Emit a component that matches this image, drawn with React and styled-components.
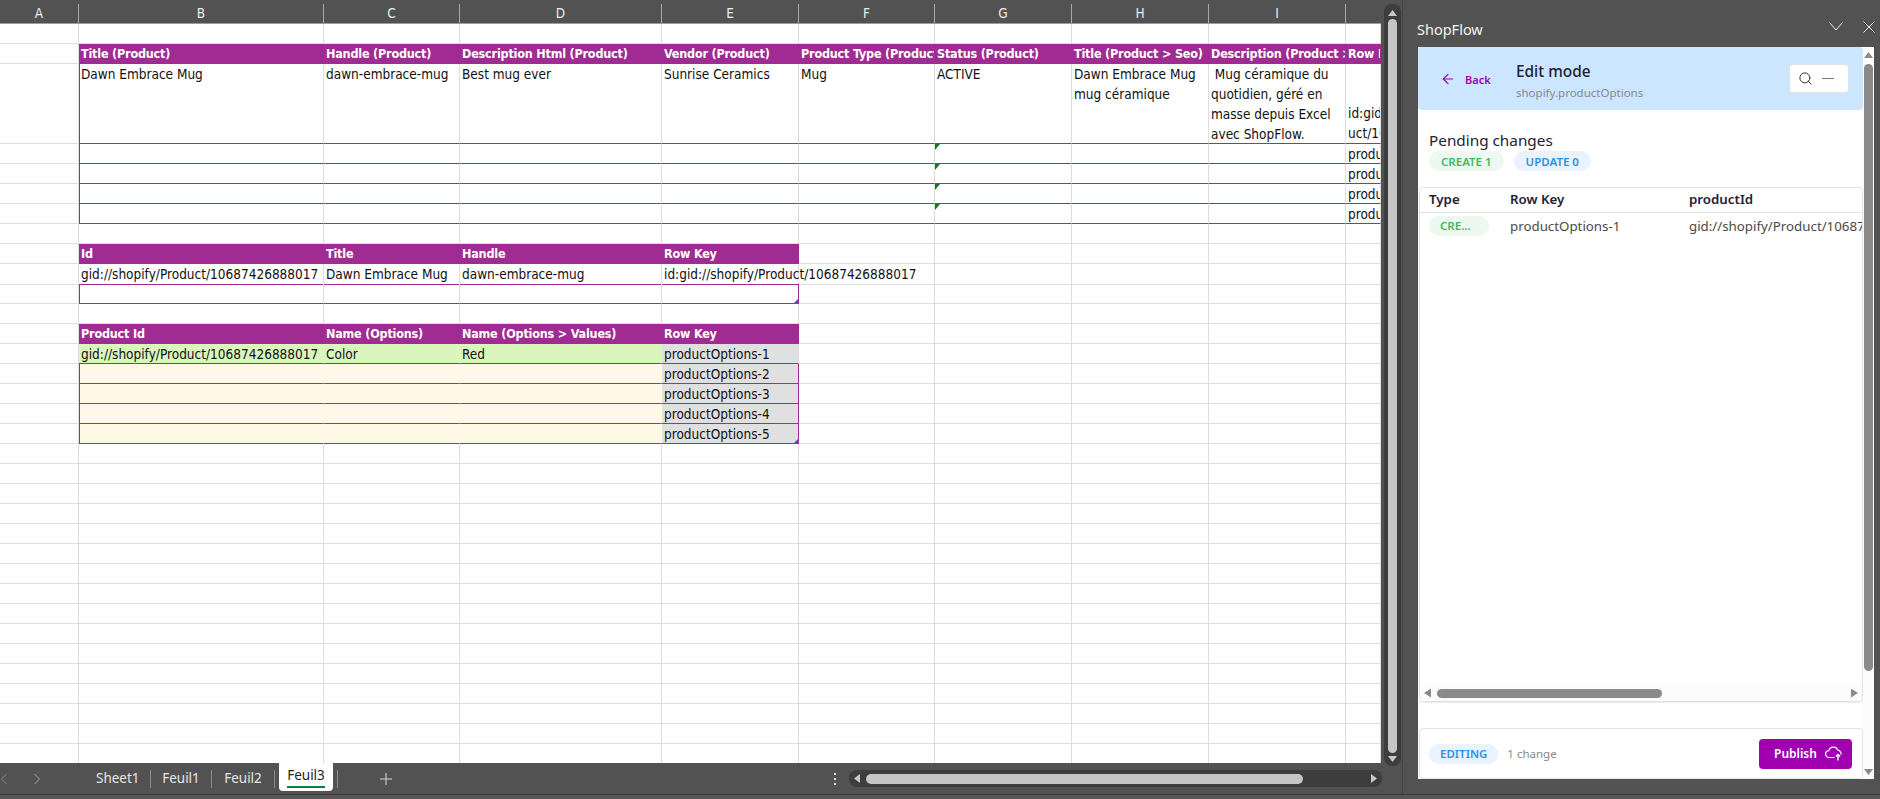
import styled, { createGlobalStyle } from 'styled-components';
import { ArrowLeft, Search } from 'lucide-react';

const GlobalStyle = createGlobalStyle`
	html, body {
		margin: 0;
		padding: 0;
		background: #525252;
	}
	* {
		box-sizing: border-box;
	}
`;

const COLUMNS = [79, 245, 136, 202, 137, 136, 137, 137, 137, 35];
const LETTERS = ['A', 'B', 'C', 'D', 'E', 'F', 'G', 'H', 'I', 'J'];
const GID = 'gid://shopify/Product/10687426888017';

const blankRow = (height = 20) => ({ height, cells: {} });

// builds one table row, span = last column of that table
const tableRow = (values, span, opts = {}) => {
	const cells = {};
	for (let i = 1; i <= span; i++) {
		cells[i] = {
			text: values[i - 1] || '',
			head: opts.head,
			ruled: opts.ruled,
			tone: opts.tone && opts.tone(i),
			leading: opts.boxed && i === 1,
			trailing: opts.boxed && opts.closed && i === span,
			tick: opts.tick && i === 6,
			handle: opts.handle && i === span,
		};
	}
	return { height: opts.height || 20, cells };
};

const optionTone = (first) => (i) => (i === 4 ? 'grey' : first ? 'green' : 'cream');

const rows = [
	blankRow(),
	tableRow(
		[
			'Title (Product)',
			'Handle (Product)',
			'Description Html (Product)',
			'Vendor (Product)',
			'Product Type (Product)',
			'Status (Product)',
			'Title (Product > Seo)',
			'Description (Product > Seo)',
			'Row Key',
		],
		9,
		{ head: true }
	),
	tableRow(
		[
			'Dawn Embrace Mug',
			'dawn-embrace-mug',
			'Best mug ever',
			'Sunrise Ceramics',
			'Mug',
			'ACTIVE',
			'Dawn Embrace Mug\nmug céramique',
			' Mug céramique du\nquotidien, géré en\nmasse depuis Excel\navec ShopFlow.',
			'id:gid\nuct/10',
		],
		9,
		{ height: 80, ruled: true, boxed: true }
	),
	tableRow(['', '', '', '', '', '', '', '', 'productOptions-1'], 9, { ruled: true, boxed: true, tick: true }),
	tableRow(['', '', '', '', '', '', '', '', 'productOptions-2'], 9, { ruled: true, boxed: true, tick: true }),
	tableRow(['', '', '', '', '', '', '', '', 'productOptions-3'], 9, { ruled: true, boxed: true, tick: true }),
	tableRow(['', '', '', '', '', '', '', '', 'productOptions-4'], 9, { ruled: true, boxed: true, tick: true }),
	blankRow(),
	tableRow(['Id', 'Title', 'Handle', 'Row Key'], 4, { head: true }),
	tableRow([GID, 'Dawn Embrace Mug', 'dawn-embrace-mug', 'id:' + GID], 4, { ruled: true }),
	tableRow([], 4, { ruled: true, boxed: true, closed: true, handle: true }),
	blankRow(),
	tableRow(['Product Id', 'Name (Options)', 'Name (Options > Values)', 'Row Key'], 4, { head: true }),
	tableRow([GID, 'Color', 'Red', 'productOptions-1'], 4, { ruled: true, tone: optionTone(true) }),
	tableRow(['', '', '', 'productOptions-2'], 4, { ruled: true, boxed: true, closed: true, tone: optionTone(false) }),
	tableRow(['', '', '', 'productOptions-3'], 4, { ruled: true, boxed: true, closed: true, tone: optionTone(false) }),
	tableRow(['', '', '', 'productOptions-4'], 4, { ruled: true, boxed: true, closed: true, tone: optionTone(false) }),
	tableRow(['', '', '', 'productOptions-5'], 4, { ruled: true, boxed: true, closed: true, handle: true, tone: optionTone(false) }),
	...Array.from({ length: 16 }, () => blankRow()),
];

const TONES = { green: '#daf6bd', cream: '#fff8e6', grey: '#e0e0e0' };

const Cell = ({ cell }) => {
	if (!cell) return <GridCell />;
	const bottomAligned = cell.text === 'id:gid\nuct/10';
	return (
		<GridCell
			$head={cell.head}
			$ruled={cell.ruled}
			$tone={cell.tone}
			$leading={cell.leading}
			$trailing={cell.trailing}
			$tick={cell.tick}
			$handle={cell.handle}
			$bottom={bottomAligned}
			$spill={cell.text.startsWith('id:gid://')}
		>
			{cell.text}
		</GridCell>
	);
};

const Arrow = styled.span`
	display: block;
	flex: none;
	width: ${(p) => p.$w || 8}px;
	height: ${(p) => p.$h || 6}px;
	background: ${(p) => p.$color || '#c8c8c8'};
	clip-path: ${(p) =>
		({
			up: 'polygon(50% 0, 100% 100%, 0 100%)',
			down: 'polygon(0 0, 100% 0, 50% 100%)',
			left: 'polygon(100% 0, 100% 100%, 0 50%)',
			right: 'polygon(0 0, 100% 50%, 0 100%)',
		})[p.$dir]};
`;

const App = () => {
	return (
		<>
			<GlobalStyle />
			<Window>
				<Main>
					<Workbook>
						<SheetRow>
							<Sheet>
								<ColumnHeader>
									{LETTERS.map((letter) => (
										<ColumnLetter key={letter}>{letter === 'J' ? '' : letter}</ColumnLetter>
									))}
								</ColumnHeader>
								{rows.map((row, r) => (
									<SheetLine key={r} $height={row.height}>
										{COLUMNS.map((_, c) => (
											<Cell key={c} cell={row.cells[c]} />
										))}
									</SheetLine>
								))}
							</Sheet>
							<SheetScrollGutter>
								<SheetScrollTrack>
									<Arrow $dir='up' $w={9} $h={6} />
									<SheetScrollThumb />
									<Arrow $dir='down' $w={9} $h={6} />
								</SheetScrollTrack>
							</SheetScrollGutter>
						</SheetRow>
						<TabBar>
							<TabNav>
								<NavChevron viewBox='0 0 8 12' $left={0} $dim>
									<path d='M6.5 1 1.5 6l5 5' />
								</NavChevron>
								<NavChevron viewBox='0 0 8 12' $left={33}>
									<path d='M1.5 1l5 5-5 5' />
								</NavChevron>
							</TabNav>
							<Tab $w={54} $first>Sheet1</Tab>
							<TabDivider />
							<Tab $w={60}>Feuil1</Tab>
							<TabDivider />
							<Tab $w={62}>Feuil2</Tab>
							<TabDivider />
							<ActiveTab>Feuil3</ActiveTab>
							<TabDivider />
							<AddSheet>
								<svg width='12' height='12' viewBox='0 0 12 12'>
									<path d='M6 0v12M0 6h12' stroke='#d8d8d8' strokeWidth='1' fill='none' />
								</svg>
							</AddSheet>
							<TabDots>
								<i />
								<i />
								<i />
							</TabDots>
							<HScroll>
								<Arrow $dir='left' $w={6} $h={9} />
								<HScrollThumb />
								<Arrow $dir='right' $w={6} $h={9} />
							</HScroll>
						</TabBar>
					</Workbook>
					<Panel>
						<PanelTitleBar>
							<PanelTitle>ShopFlow</PanelTitle>
							<PanelControls>
								<svg width='14' height='9' viewBox='0 0 14 9'>
									<path d='M.5.5 7 8 13.5.5' stroke='#eee' fill='none' />
								</svg>
								<svg width='12' height='12' viewBox='0 0 12 12'>
									<path d='M.5.5l11 11M11.5.5l-11 11' stroke='#eee' fill='none' />
								</svg>
							</PanelControls>
						</PanelTitleBar>
						<PanelBody>
							<PanelContent>
								<EditHeader>
									<BackLink>
										<ArrowLeft size={16} strokeWidth={1.8} />
										<span>Back</span>
									</BackLink>
									<EditTitles>
										<EditTitle>Edit mode</EditTitle>
										<EditSubtitle>shopify.productOptions</EditSubtitle>
									</EditTitles>
									<SearchBox>
										<Search size={15} strokeWidth={1.6} />
										<SearchDash />
									</SearchBox>
								</EditHeader>
								<Pending>
									<PendingTitle>Pending changes</PendingTitle>
									<BadgeRow>
										<Badge $kind='create'>CREATE 1</Badge>
										<Badge $kind='update'>UPDATE 0</Badge>
									</BadgeRow>
								</Pending>
								<ChangesCard>
									<ChangesHead>
										<TypeCol>Type</TypeCol>
										<KeyCol>Row Key</KeyCol>
										<IdCol>productId</IdCol>
									</ChangesHead>
									<ChangesRow>
										<TypeCol>
											<TypeBadge>CRE...</TypeBadge>
										</TypeCol>
										<KeyCol>productOptions-1</KeyCol>
										<IdCol>{GID}</IdCol>
									</ChangesRow>
									<CardSpacer />
									<CardScroll>
										<Arrow $dir='left' $w={7} $h={9} $color='#8a8a8a' />
										<CardScrollTrack>
											<CardScrollThumb />
										</CardScrollTrack>
										<Arrow $dir='right' $w={7} $h={9} $color='#8a8a8a' />
									</CardScroll>
								</ChangesCard>
								<FooterCard>
									<Badge $kind='update' $tight>EDITING</Badge>
									<ChangeCount>1 change</ChangeCount>
									<PublishButton>
										<span>Publish</span>
										<svg width='17' height='15' viewBox='0 0 17 15' fill='none' stroke='#fff' strokeWidth='1.2'>
											<path d='M9.5 11.5H4.2a3.4 3.4 0 0 1-.4-6.8 4.8 4.8 0 0 1 9.1-.6 3.6 3.6 0 0 1 3 4.6' />
											<path d='M13 14.5V8.6M10.9 10.6l2.1-2.1 2.1 2.1' strokeWidth='1.4' />
										</svg>
									</PublishButton>
								</FooterCard>
							</PanelContent>
							<PanelScroll>
								<Arrow $dir='up' $w={9} $h={6} $color='#8a8a8a' />
								<PanelThumb />
								<PanelScrollGap />
								<Arrow $dir='down' $w={9} $h={6} $color='#8a8a8a' />
							</PanelScroll>
						</PanelBody>
					</Panel>
				</Main>
				<StatusBar />
			</Window>
		</>
	);
};

export default App;

const uiFont = `'Noto Sans', 'Open Sans', sans-serif`;
const sheetFont = `'Liberation Sans Narrow', 'DejaVu Sans Condensed', 'Liberation Sans', sans-serif`;

const Window = styled.div`
	width: 1880px;
	height: 799px;
	display: flex;
	flex-direction: column;
	background: #525252;
	overflow: hidden;
`;

const Main = styled.div`
	display: flex;
	height: 795px;
	border-bottom: 1px solid #3c3c3c;
`;

const StatusBar = styled.div`
	height: 4px;
	background: #575757;
`;

const Workbook = styled.div`
	width: 1403px;
	display: flex;
	flex-direction: column;
	border-right: 1px solid #444;
`;

const SheetRow = styled.div`
	display: flex;
	height: 763px;
`;

const Sheet = styled.div`
	width: 1381px;
	height: 763px;
	background: #fff;
	overflow: hidden;
`;

const ColumnHeader = styled.div`
	display: grid;
	grid-template-columns: ${COLUMNS.map((w) => w + 'px').join(' ')};
	height: 24px;
	padding-top: 4px;
	background: #525252;
	border-bottom: 1px solid #9c9c9c;
`;

const ColumnLetter = styled.div`
	font: 13.5px/19px ${sheetFont};
	color: #ececec;
	text-align: center;
	border-right: 1px solid #a8a8a8;

	&:last-child {
		border-right: 0;
	}
`;

const SheetLine = styled.div`
	display: grid;
	grid-template-columns: ${COLUMNS.map((w) => w + 'px').join(' ')};
	height: ${(p) => p.$height}px;
`;

const GridCell = styled.div`
	position: relative;
	display: flex;
	align-items: ${(p) => (p.$bottom ? 'flex-end' : 'flex-start')};
	padding-left: 2px;
	min-width: 0;
	overflow: ${(p) => (p.$spill ? 'visible' : 'hidden')};
	white-space: pre;
	font: ${(p) => (p.$head ? '700 12.5px/20px' : '400 13.5px/20px')} ${sheetFont};
	letter-spacing: ${(p) => (p.$head ? '-0.2px' : '0')};
	color: ${(p) => (p.$head ? '#fff' : '#111')};
	background: ${(p) => (p.$head ? '#a02b93' : TONES[p.$tone] || 'transparent')};
	border-right: 1px solid ${(p) => (p.$trailing ? '#a02b93' : p.$head || p.$tone ? 'transparent' : '#dedede')};
	border-bottom: 1px solid ${(p) => (p.$ruled ? '#a02b93' : p.$head ? 'transparent' : '#dedede')};
	box-shadow: ${(p) => (p.$leading ? 'inset 1px 0 0 #a02b93' : 'none')};

	&::before {
		content: '';
		display: ${(p) => (p.$tick ? 'block' : 'none')};
		position: absolute;
		top: 0;
		left: 0;
		border-top: 6px solid #0a7a1e;
		border-right: 5px solid transparent;
	}

	&::after {
		content: '';
		display: ${(p) => (p.$handle ? 'block' : 'none')};
		position: absolute;
		right: 0;
		bottom: 0;
		border-bottom: 4px solid #4a50ae;
		border-left: 4px solid transparent;
	}
`;

const SheetScrollGutter = styled.div`
	flex: 1;
	padding: 4px 0 0 3px;
`;

const SheetScrollTrack = styled.div`
	width: 17px;
	height: 762px;
	position: relative;
	z-index: 1;
	display: flex;
	flex-direction: column;
	align-items: center;
	padding: 6px 0 4px;
	gap: 3px;
	background: #3d3d3d;
	border-radius: 8px;
`;

const SheetScrollThumb = styled.div`
	flex: 1;
	width: 9px;
	background: #c6c6c6;
	border-radius: 5px;
`;

const TabBar = styled.div`
	height: 31px;
	display: flex;
	align-items: flex-start;
	background: #525252;
	font: 13.5px/30px ${uiFont};
	color: #e6e6e6;
`;

const TabNav = styled.div`
	position: relative;
	width: 96px;
	height: 31px;
	flex: none;
`;

const NavChevron = styled.svg`
	position: absolute;
	top: 10px;
	left: ${(p) => p.$left}px;
	width: 8px;
	height: 12px;
	fill: none;
	stroke: ${(p) => (p.$dim ? '#868686' : '#adadad')};
`;

const Tab = styled.div`
	width: ${(p) => p.$w}px;
	flex: none;
	text-align: ${(p) => (p.$first ? 'left' : 'center')};
`;

const TabDivider = styled.div`
	width: 1px;
	height: 18px;
	margin-top: 7px;
	background: #8c8c8c;
`;

const ActiveTab = styled.div`
	width: 54px;
	height: 28px;
	margin: 0 4px;
	background: #fff;
	color: #222;
	line-height: 25px;
	text-align: center;
	border-radius: 0 0 4px 4px;
	position: relative;

	&::after {
		content: '';
		position: absolute;
		left: 8px;
		right: 8px;
		bottom: 3px;
		height: 2px;
		background: #107c41;
	}
`;

const AddSheet = styled.div`
	margin-left: 42px;
	height: 31px;
	display: flex;
	align-items: center;
`;

const TabDots = styled.div`
	margin-left: 442px;
	width: 3px;
	height: 31px;
	display: flex;
	flex-direction: column;
	justify-content: center;
	gap: 3px;

	i {
		width: 2px;
		height: 2px;
		background: #e0e0e0;
	}
`;

const HScroll = styled.div`
	margin: 7px 0 0 12px;
	width: 533px;
	height: 17px;
	display: flex;
	align-items: center;
	padding: 0 5px;
	gap: 6px;
	background: #3d3d3d;
	border-radius: 8px;
	flex: none;

	${Arrow}:last-child {
		margin-left: auto;
	}
`;

const HScrollThumb = styled.div`
	width: 437px;
	height: 10px;
	background: #c6c6c6;
	border-radius: 5px;
`;

const Panel = styled.div`
	flex: 1;
	display: flex;
	flex-direction: column;
	padding: 0 6px 15px 15px;
	font-family: ${uiFont};
`;

const PanelTitleBar = styled.div`
	height: 47px;
	display: flex;
	align-items: center;
	justify-content: space-between;
	padding-top: 10px;
`;

const PanelTitle = styled.div`
	font-size: 14.5px;
	margin-left: -1px;
	color: #f2f2f2;
`;

const PanelControls = styled.div`
	display: flex;
	align-items: center;
	gap: 20px;
	margin-bottom: 4px;
	margin-right: -1px;
`;

const PanelBody = styled.div`
	flex: 1;
	display: flex;
	background: #fff;
`;

const PanelContent = styled.div`
	width: 445px;
	display: flex;
	flex-direction: column;
`;

const EditHeader = styled.div`
	height: 63px;
	display: flex;
	align-items: center;
	padding: 0 14px 0 22px;
	background: #cce6ff;
	border-radius: 4px;
`;

const BackLink = styled.div`
	display: flex;
	align-items: center;
	gap: 9px;
	width: 76px;
	margin-top: 1px;
	font-size: 11px;
	font-weight: 600;
	color: #a000b0;
`;

const EditTitles = styled.div`
	flex: 1;
	display: flex;
	flex-direction: column;
	margin-top: 6px;
`;

const EditTitle = styled.div`
	font-size: 15.4px;
	line-height: 20px;
	font-weight: 500;
	color: #242033;
`;

const EditSubtitle = styled.div`
	font-size: 11.5px;
	line-height: 18px;
	margin-top: 2px;
	color: #85888f;
`;

const SearchBox = styled.div`
	width: 60px;
	height: 29px;
	display: flex;
	align-items: center;
	gap: 9px;
	padding-left: 8px;
	background: #fff;
	border: 1px solid #dfe3e8;
	border-radius: 4px;
	color: #333;
`;

const SearchDash = styled.div`
	width: 12px;
	height: 1px;
	background: #777;
`;

const Pending = styled.div`
	height: 77px;
	padding: 20px 11px 0;
`;

const PendingTitle = styled.div`
	font-size: 15.3px;
	line-height: 20px;
	color: #242033;
`;

const BadgeRow = styled.div`
	display: flex;
	gap: 10px;
	margin-top: 1px;
`;

const Badge = styled.div`
	height: 20px;
	padding: 0 ${(p) => (p.$tight ? 11 : 12)}px;
	display: flex;
	align-items: center;
	font-size: 11.5px;
	font-weight: 600;
	border-radius: 10px;
	color: ${(p) => (p.$kind === 'create' ? '#3dbb5f' : '#2f8fe6')};
	background: ${(p) => (p.$kind === 'create' ? '#edf8f0' : '#e8f3fd')};
`;

const ChangesCard = styled.div`
	height: 515px;
	margin-left: 1px;
	display: flex;
	flex-direction: column;
	border: 1px solid #e1e3e8;
	border-radius: 4px;
	box-shadow: 0 1px 1px rgba(0, 0, 0, 0.08);
	overflow: hidden;
`;

const ChangesHead = styled.div`
	height: 25px;
	flex: none;
	display: flex;
	align-items: center;
	padding-bottom: 2px;
	white-space: nowrap;
	font-size: 13.3px;
	font-weight: 600;
	color: #242033;
	border-bottom: 1px solid #e1e3e8;
`;

const ChangesRow = styled.div`
	height: 25px;
	flex: none;
	display: flex;
	align-items: center;
	white-space: nowrap;
	font-size: 13.3px;
	color: #4a4a4a;
`;

const TypeCol = styled.div`
	width: 90px;
	padding-left: 9px;
	flex: none;
`;

const KeyCol = styled.div`
	width: 179px;
	flex: none;
`;

const IdCol = styled.div`
	flex: none;
`;

const TypeBadge = styled.div`
	width: 60px;
	height: 20px;
	padding-left: 11px;
	font-size: 11.5px;
	font-weight: 600;
	line-height: 20px;
	color: #3dbb5f;
	background: #edf8f0;
	border-radius: 10px;
`;

const CardSpacer = styled.div`
	flex: 1;
`;

const CardScroll = styled.div`
	height: 16px;
	flex: none;
	display: flex;
	align-items: center;
	padding: 0 4px;
	gap: 6px;
	background: #fbfbfb;
`;

const CardScrollTrack = styled.div`
	flex: 1;
`;

const CardScrollThumb = styled.div`
	width: 225px;
	height: 9px;
	background: #8a8a8a;
	border-radius: 5px;
`;

const FooterCard = styled.div`
	height: 51px;
	margin: 26px 0 0 1px;
	display: flex;
	align-items: center;
	padding: 0 10px 0 9px;
	border: 1px solid #e1e3e8;
	border-radius: 4px;
`;

const ChangeCount = styled.div`
	margin-left: 9px;
	font-size: 11.5px;
	color: #85888f;
`;

const PublishButton = styled.div`
	width: 93px;
	height: 30px;
	margin-left: auto;
	display: flex;
	align-items: center;
	justify-content: space-between;
	padding: 0 10px 0 15px;
	font-size: 12px;
	font-weight: 600;
	color: #fff;
	background: #a000b0;
	border-radius: 4px;
`;

const PanelScroll = styled.div`
	flex: 1;
	display: flex;
	flex-direction: column;
	align-items: center;
	padding: 5px 0 4px;
	background: #fcfcfc;
`;

const PanelThumb = styled.div`
	width: 9px;
	height: 607px;
	margin-top: 6px;
	background: #8a8a8a;
	border-radius: 5px;
`;

const PanelScrollGap = styled.div`
	flex: 1;
`;
